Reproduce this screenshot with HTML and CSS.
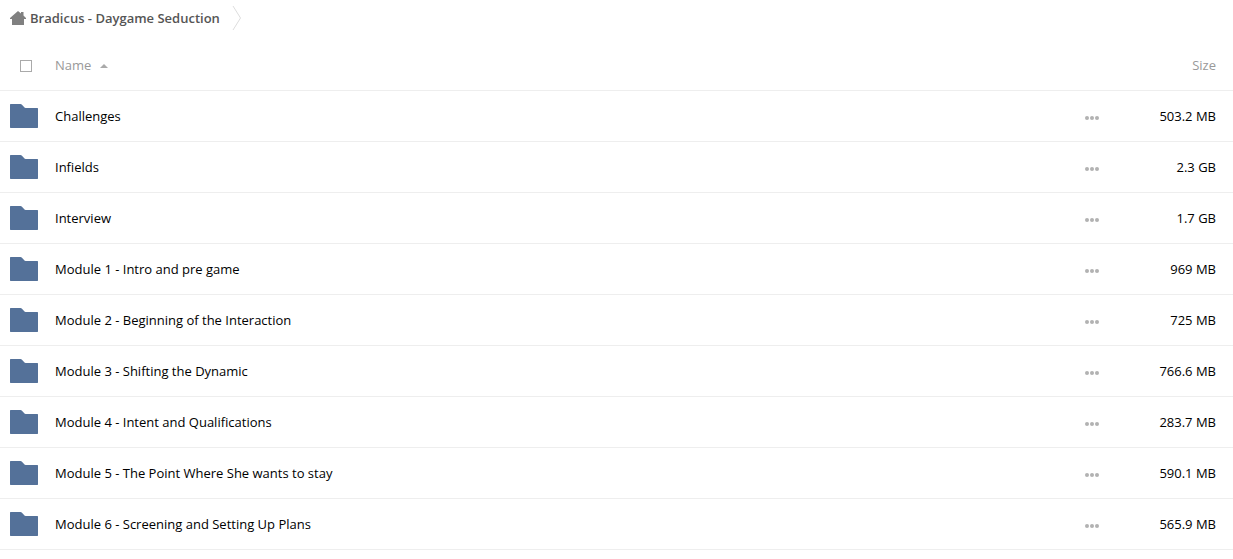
FILE: index.html
```
<!DOCTYPE html>
<html lang="en">
<head>
<meta charset="utf-8">
<title>Bradicus - Daygame Seduction</title>
<link rel="stylesheet" href="styles.css">
</head>
<body>
<svg class="sprite" aria-hidden="true">
  <symbol id="folder" viewBox="0 0 28 24"><path d="M.5 0H10.500q.7 0 1.200.5L14.500 3.600q.4.400 1 .4H27.500l.5.500v19l-.5.500H.5l-.5-.5V.5z"/></symbol>
  <symbol id="dots" viewBox="0 0 14 4"><circle cx="2" cy="2" r="2"/><circle cx="7" cy="2" r="2"/><circle cx="12" cy="2" r="2"/></symbol>
</svg>
<nav class="breadcrumb" aria-label="Breadcrumb">
  <a class="crumb" href="#">
    <svg class="home" viewBox="0 0 16 14" aria-hidden="true"><path d="M8 0l3 2.500V1h2.500v3.500L16 7v1h-2v6H2V8H0V7z"/></svg>
    <span>Bradicus - Daygame Seduction</span>
  </a>
  <svg class="separator" viewBox="0 0 10 24" aria-hidden="true"><path d="M1 0l7.500 12L1 24"/></svg>
</nav>
<table class="files">
  <thead>
    <tr>
      <th class="lead"><input class="check" type="checkbox" aria-label="Select all"></th>
      <th class="name"><button class="sort" type="button">Name<span class="arrow"></span></button></th>
      <th class="actions"></th>
      <th class="size">Size</th>
    </tr>
  </thead>
  <tbody id="rows"></tbody>
</table>
<script src="script.js"></script>
</body>
</html>
```
FILE: styles.css
```
* { box-sizing: border-box; }
body {
  margin: 0;
  background: #fff;
  color: #000;
  font: 13px/18px "Open Sans", sans-serif;
}
.sprite { display: none; }
.breadcrumb {
  display: flex;
  align-items: center;
  gap: 12px;
  height: 36px;
  padding-left: 10px;
}
.crumb {
  display: flex;
  align-items: center;
  gap: 4px;
  color: #555;
  font-weight: 600;
  text-decoration: none;
}
.home { width: 16px; height: 14px; fill: #808080; }
.separator { width: 10px; height: 24px; fill: none; stroke: #ddd; }
.files {
  width: 100%;
  margin-top: 4px;
  border-collapse: separate;
  border-spacing: 0;
  table-layout: fixed;
}
th, td {
  height: 51px;
  padding: 0;
  border-bottom: 1px solid #eee;
  font-weight: 400;
  text-align: left;
  vertical-align: middle;
}
th { color: #999; }
.lead { width: 55px; padding-left: 10px; }
.actions { width: 48px; }
.size { width: 100px; padding-right: 17px; text-align: right; }
.check {
  display: block;
  appearance: none;
  width: 12px;
  height: 12px;
  margin: 2px 0 0 10px;
  border: 1px solid #aaa;
  background: #fff;
}
.check:checked { background: #547199; }
.sort, .more {
  padding: 0;
  border: 0;
  background: none;
  color: inherit;
  font: inherit;
  cursor: pointer;
}
.sort { display: flex; align-items: center; gap: 9px; }
.arrow {
  margin-top: 2px;
  border: 4px solid transparent;
  border-top: 0;
  border-bottom-color: #aaa;
}
.folder { display: block; width: 28px; height: 24px; fill: #547199; }
.more { display: block; padding-top: 4px; }
.dots { display: block; width: 14px; height: 4px; fill: #b2b2b2; }
.file { color: inherit; text-decoration: none; }
```
FILE: script.js
```
const folders = [
  ["Challenges", "503.2 MB"],
  ["Infields", "2.3 GB"],
  ["Interview", "1.7 GB"],
  ["Module 1 - Intro and pre game", "969 MB"],
  ["Module 2 - Beginning of the Interaction", "725 MB"],
  ["Module 3 - Shifting the Dynamic", "766.6 MB"],
  ["Module 4 - Intent and Qualifications", "283.7 MB"],
  ["Module 5 - The Point Where She wants to stay", "590.1 MB"],
  ["Module 6 - Screening and Setting Up Plans", "565.9 MB"]
];
document.getElementById("rows").innerHTML = folders.map(([name, size]) => `
  <tr>
    <td class="lead"><svg class="folder" aria-hidden="true"><use href="#folder"/></svg></td>
    <td class="name"><a class="file" href="#">${name}</a></td>
    <td class="actions"><button class="more" type="button" aria-label="Actions for ${name}"><svg class="dots" aria-hidden="true"><use href="#dots"/></svg></button></td>
    <td class="size">${size}</td>
  </tr>`).join("");
```
